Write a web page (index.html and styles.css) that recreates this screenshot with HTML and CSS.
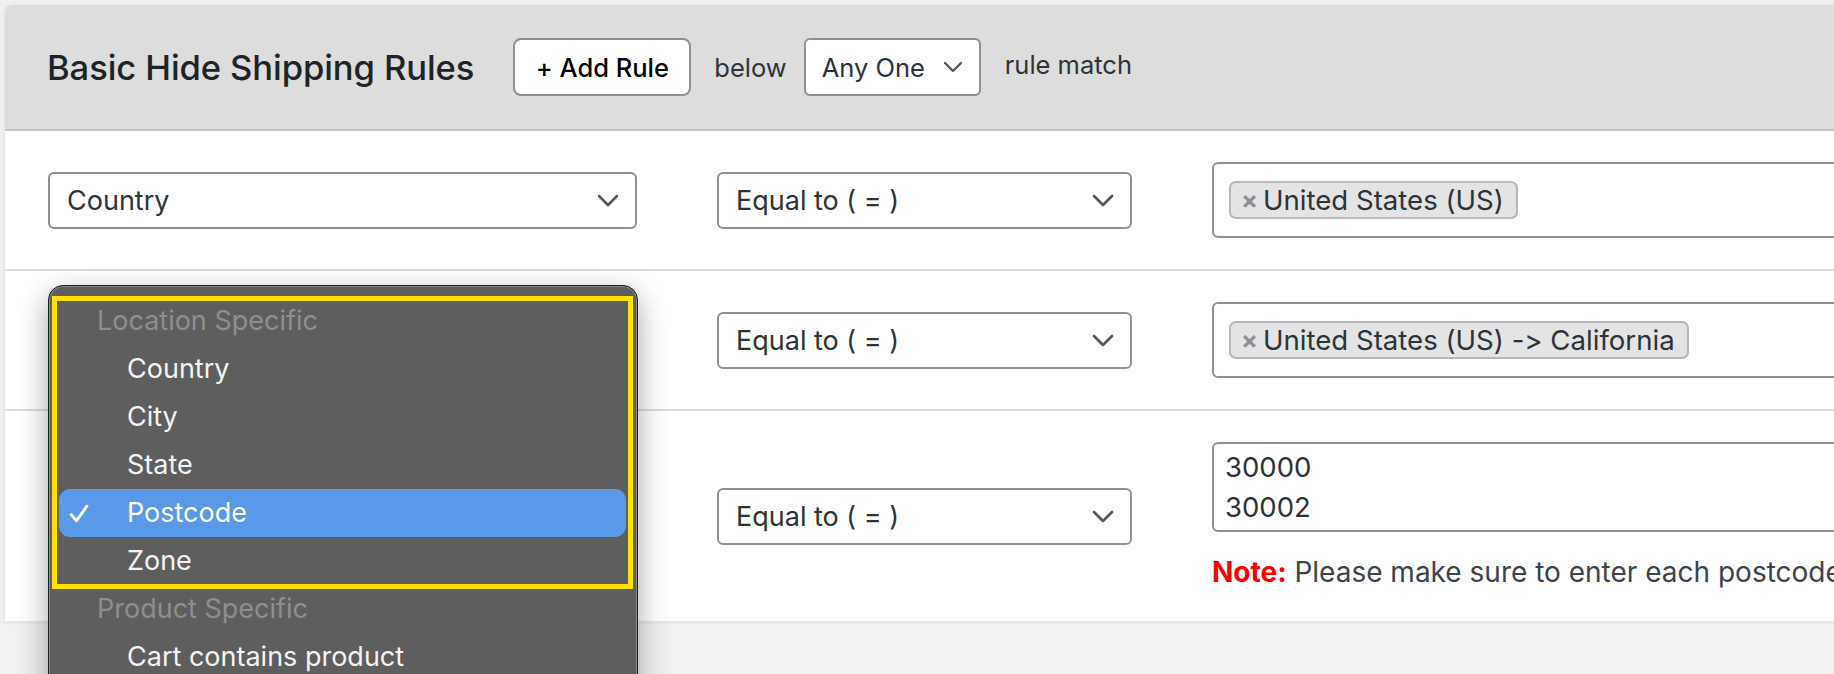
FILE: index.html
```html
<!DOCTYPE html>
<html lang="en">
<head>
<meta charset="utf-8">
<title>Basic Hide Shipping Rules</title>
<link rel="stylesheet" href="styles.css">
</head>
<body>
<div class="page">
  <div class="panel">
    <div class="head">
      <h2 class="title">Basic Hide Shipping Rules</h2>
      <button class="btn">+ Add Rule</button>
      <span class="lbl">below</span>
      <div class="sel sel-sm"><span>Any One</span><svg class="chev-sm" viewBox="0 0 20 12"><polyline points="2,2 10,10 18,2"/></svg></div>
      <span class="lbl lbl-up">rule match</span>
    </div>

    <div class="row">
      <div class="sel"><span>Country</span><svg class="chev" viewBox="0 0 22 13"><polyline points="2,2 11,11 20,2"/></svg></div>
      <div class="sel"><span>Equal to ( = )</span><svg class="chev" viewBox="0 0 22 13"><polyline points="2,2 11,11 20,2"/></svg></div>
      <div class="multi"><span class="tag"><span class="x">×</span>United States (US)</span></div>
    </div>

    <div class="row">
      <div class="sel"><span>State</span><svg class="chev" viewBox="0 0 22 13"><polyline points="2,2 11,11 20,2"/></svg></div>
      <div class="sel"><span>Equal to ( = )</span><svg class="chev" viewBox="0 0 22 13"><polyline points="2,2 11,11 20,2"/></svg></div>
      <div class="multi"><span class="tag"><span class="x">×</span>United States (US) -&gt; California</span></div>
    </div>

    <div class="row row-last">
      <div class="opener">
        <div class="sel"><span>Postcode</span><svg class="chev" viewBox="0 0 22 13"><polyline points="2,2 11,11 20,2"/></svg></div>
        <div class="popup">
          <div class="grp">Location Specific</div>
          <div class="opt">Country</div>
          <div class="opt">City</div>
          <div class="opt">State</div>
          <div class="opt opt-on"><svg class="check" viewBox="0 0 19 18"><polyline points="2,10 7,16 17,2"/></svg>Postcode</div>
          <div class="opt">Zone</div>
          <div class="grp">Product Specific</div>
          <div class="opt">Cart contains product</div>
          <div class="opt">Cart doesn't contain product</div>
          <div class="frame"></div>
        </div>
      </div>
      <div class="sel"><span>Equal to ( = )</span><svg class="chev" viewBox="0 0 22 13"><polyline points="2,2 11,11 20,2"/></svg></div>
      <div class="codes">
        <div class="area">30000<br>30002</div>
        <p class="note"><b>Note:</b> Please make sure to enter each postcode on a new line.</p>
      </div>
    </div>
  </div>
</div>
</body>
</html>
```

FILE: styles.css
```css
* { box-sizing: border-box; }

html, body {
  margin: 0;
  height: 674px;
  overflow: hidden;
  background: #f0f0f1;
  font-family: Inter, "Noto Sans", sans-serif;
  font-feature-settings: "calt" 0;
  color: #2c3338;
}

.page {
  padding: 5px 0 0 5px;
  width: 2200px;
}

.panel {
  width: 2100px;
  background: #fff;
  border-radius: 6px 0 0 0;
  box-shadow: 0 1px 4px rgba(0, 0, 0, 0.08);
}

.head {
  height: 126px;
  background: #dddddd;
  border-bottom: 2px solid #c3c4c7;
  border-radius: 6px 0 0 0;
  display: flex;
  align-items: center;
  padding-left: 42px;
}

.title {
  margin: 0 39px 0 0;
  font-size: 34.6px;
  font-weight: 500;
  color: #1d2327;
  letter-spacing: -0.1px;
}

.btn {
  height: 58px;
  width: 178px;
  border: 2px solid #8c8f94;
  border-radius: 8px;
  background: #fff;
  font-family: inherit;
  font-feature-settings: "calt" 0;
  font-size: 25.5px;
  font-weight: 500;
  color: #000;
  padding: 0;
  margin-right: 23px;
}

.lbl {
  font-size: 25.5px;
  color: #2c3338;
  margin-right: 17px;
}

.lbl-up {
  margin-left: 3px;
  margin-bottom: 6px;
}

.sel {
  height: 57px;
  border: 2px solid #8c8f94;
  border-radius: 6px;
  background: #fff;
  display: flex;
  align-items: center;
  justify-content: space-between;
  padding: 0 16px 0 17px;
  font-size: 27px;
  color: #2c3338;
}

.sel-sm {
  width: 177px;
  height: 58px;
  font-size: 25.5px;
  margin-right: 21px;
  padding: 0 16px 0 16px;
}

.chev {
  width: 22px;
  height: 13px;
  fill: none;
  stroke: #50575e;
  stroke-width: 2.6;
  stroke-linecap: round;
  stroke-linejoin: round;
}

.chev-sm {
  width: 20px;
  height: 12px;
  fill: none;
  stroke: #50575e;
  stroke-width: 2.4;
  stroke-linecap: round;
  stroke-linejoin: round;
}

.row {
  display: grid;
  grid-template-columns: 589px 415px 760px;
  column-gap: 80px;
  align-items: center;
  padding: 31px 0 31px 43px;
  border-bottom: 2px solid #dcdcde;
}

.row-last {
  border-bottom: none;
  padding: 31px 0 31px 43px;
}

.multi {
  height: 76px;
  border: 2px solid #8c8f94;
  border-radius: 6px;
  display: flex;
  align-items: center;
  padding-left: 15px;
}

.tag {
  display: inline-flex;
  align-items: center;
  height: 38px;
  padding: 0 12px 0 10px;
  background: #e4e4e4;
  border: 2px solid #b4b6b9;
  border-radius: 7px;
  font-size: 27.6px;
  color: #2c3338;
}

.x {
  font-size: 25px;
  font-weight: 700;
  color: #8c8f94;
  margin-right: 5px;
}

.codes {
  display: flex;
  flex-direction: column;
}

.area {
  height: 90px;
  border: 2px solid #8c8f94;
  border-radius: 6px;
  padding: 3px 11px;
  font-size: 27.5px;
  line-height: 40px;
  color: #2c3338;
}

.note {
  margin: 22px 0 0 0;
  height: 36px;
  line-height: 36px;
  font-size: 28px;
  color: #3c434a;
  white-space: nowrap;
}

.note b {
  color: #ff0000;
  font-weight: 700;
}

/* native popup */
.opener {
  position: relative;
}

.popup {
  position: absolute;
  left: 0;
  top: -203px;
  width: 590px;
  height: 560px;
  background: #5e5e5e;
  border: 1px solid #1e1e1e;
  border-radius: 15px;
  box-shadow: inset 0 0 0 1px #8a8a8a, 0 10px 30px rgba(0, 0, 0, 0.35);
  padding: 11px 11px 0 10px;
  font-size: 27px;
  color: #f4f4f4;
}

.grp,
.opt {
  height: 48px;
  display: flex;
  align-items: center;
}

.grp {
  padding-left: 38px;
  color: #8e8e8e;
}

.opt {
  padding-left: 68px;
  position: relative;
}

.opt-on {
  background: #5a99e6;
  border-radius: 11px;
  color: #fff;
}

.check {
  position: absolute;
  left: 10px;
  top: 15px;
  width: 20px;
  height: 19px;
  fill: none;
  stroke: #fff;
  stroke-width: 2.8;
  stroke-linecap: round;
  stroke-linejoin: round;
}

.frame {
  position: absolute;
  left: 3px;
  top: 10px;
  width: 581px;
  height: 293px;
  border: 5px solid #ffe000;
  pointer-events: none;
}
```
